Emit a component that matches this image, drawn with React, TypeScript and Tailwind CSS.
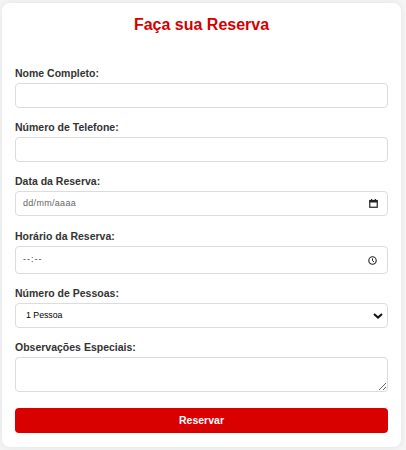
import { useState } from "react";

function Field({ label, children, mb = "mb-[13px]" }: { label: string; children: React.ReactNode; mb?: string }) {
  return (
    <div className={mb}>
      <label className="block text-[10.5px] leading-[12px] font-bold text-[#333] mb-[4px]">{label}</label>
      {children}
    </div>
  );
}

export default function App() {
  const [nome, setNome] = useState("");
  const [telefone, setTelefone] = useState("");
  const [pessoas, setPessoas] = useState("1");
  const [obs, setObs] = useState("");

  const inputCls =
    "block w-full h-[25px] border border-[#dcdcdc] rounded-[4px] bg-white px-[7px] text-[9px] text-[#222] outline-none";

  return (
    <div className="min-h-[450px] bg-[#f5f5f5] pt-[3px] pl-[2px]" style={{ fontFamily: '"Liberation Sans", Arial, sans-serif' }}>
      <div className="w-[399px] bg-white rounded-[8px] shadow-[0_0_8px_rgba(0,0,0,0.08)] px-[13px] pt-[13px] pb-[14px]">
        <h2 className="text-center text-[16px] leading-[18px] font-bold text-[#d40000] mb-[33px]">Faça sua Reserva</h2>

        <Field label="Nome Completo:">
          <input className={inputCls} value={nome} onChange={(e) => setNome(e.target.value)} />
        </Field>

        <Field label="Número de Telefone:">
          <input className={inputCls} value={telefone} onChange={(e) => setTelefone(e.target.value)} />
        </Field>

        <Field label="Data da Reserva:" mb="mb-[14px]">
          <div className="flex items-center justify-between h-[25px] border border-[#dcdcdc] rounded-[4px] bg-white pl-[7px] pr-[9px]">
            <span className="text-[9px] text-[#666] tracking-[0.3px]">dd/mm/aaaa</span>
            <svg width="9" height="9" viewBox="0 0 9 9">
              <rect x="0.75" y="1.5" width="7.5" height="6.75" fill="none" stroke="#222" strokeWidth="1.2" />
              <rect x="0.75" y="1.5" width="7.5" height="2" fill="#222" />
              <rect x="2" y="0" width="1.2" height="2" fill="#222" />
              <rect x="5.8" y="0" width="1.2" height="2" fill="#222" />
            </svg>
          </div>
        </Field>

        <Field label="Horário da Reserva:">
          <div className="flex items-center justify-between h-[28px] border border-[#dcdcdc] rounded-[4px] bg-white pl-[7px] pr-[10px]">
            <span className="text-[9px] text-[#444] tracking-[1px]">--:--</span>
            <svg width="9" height="9" viewBox="0 0 9 9">
              <circle cx="4.5" cy="4.5" r="3.7" fill="none" stroke="#222" strokeWidth="1.1" />
              <path d="M4.5 2.4V4.7L6 5.9" fill="none" stroke="#222" strokeWidth="1" />
            </svg>
          </div>
        </Field>

        <Field label="Número de Pessoas:">
          <div className="relative">
            <select
              className="block w-full h-[25px] appearance-none border border-[#dcdcdc] rounded-[4px] bg-white pl-[10px] pr-[24px] text-[8.75px] text-black outline-none"
              value={pessoas}
              onChange={(e) => setPessoas(e.target.value)}
            >
              <option value="1">1 Pessoa</option>
              <option value="2">2 Pessoas</option>
              <option value="3">3 Pessoas</option>
              <option value="4">4 Pessoas</option>
              <option value="5">5+ Pessoas</option>
            </select>
            <svg className="absolute right-[5px] top-[10px] pointer-events-none" width="10" height="6" viewBox="0 0 10 6">
              <path d="M1 1L5 4.6L9 1" fill="none" stroke="#111" strokeWidth="2" />
            </svg>
          </div>
        </Field>

        <Field label="Observações Especiais:" mb="mb-[16px]">
          <textarea
            className="block w-full h-[35px] border border-[#dcdcdc] rounded-[4px] bg-white px-[7px] py-[4px] text-[9px] outline-none"
            value={obs}
            onChange={(e) => setObs(e.target.value)}
          />
        </Field>

        <button className="block w-full h-[25px] rounded-[4px] bg-[#d90000] text-white text-[10.5px] font-bold">
          Reservar
        </button>
      </div>
    </div>
  );
}
